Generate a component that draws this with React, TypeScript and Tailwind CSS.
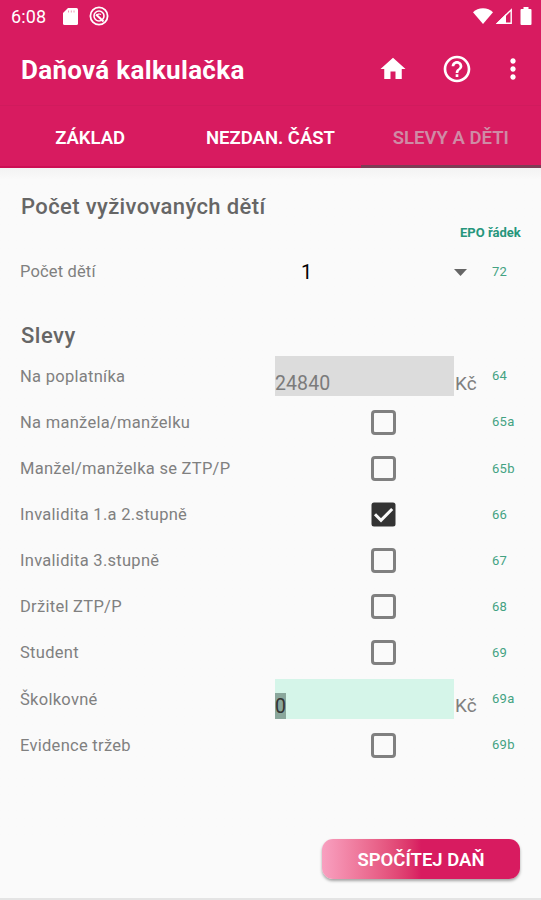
import { MdHome, MdHelpOutline, MdMoreVert } from "react-icons/md";

interface Row {
  label: string;
  code: string;
  checked?: boolean;
  value?: string;
  active?: boolean;
}

const ROWS: Row[] = [
  { label: "Na poplatníka", code: "64", value: "24840" },
  { label: "Na manžela/manželku", code: "65a" },
  { label: "Manžel/manželka se ZTP/P", code: "65b" },
  { label: "Invalidita 1.a 2.stupně", code: "66", checked: true },
  { label: "Invalidita 3.stupně", code: "67" },
  { label: "Držitel ZTP/P", code: "68" },
  { label: "Student", code: "69" },
  { label: "Školkovné", code: "69a", value: "0", active: true },
  { label: "Evidence tržeb", code: "69b" },
];

function StatusBar() {
  return (
    <div className="flex h-8 items-center pl-[11px] pr-[9px]">
      <span className="w-[52px] pt-px text-[18px] leading-8 tracking-[0.1px]">6:08</span>
      <svg width="15" height="17" viewBox="0 0 15 17" fill="currentColor">
        <path d="M5 0h8.500a1.500 1.500 0 0 1 1.500 1.500v14a1.500 1.500 0 0 1-1.500 1.500h-12a1.500 1.500 0 0 1-1.500-1.500V5z" />
        <path d="M5.500 2.500v2M8.300 2.500v2M11 2.500v2" stroke="#d81b60" strokeOpacity=".45" strokeWidth="1" />
      </svg>
      <svg className="ml-[11px]" width="20" height="20" viewBox="0 0 20 20" fill="none" stroke="currentColor">
        <circle cx="10" cy="10" r="8.600" strokeWidth="1.800" />
        <circle cx="10" cy="10" r="5" strokeWidth="1.600" />
        <path d="M7 8.500 14.500 15.500" strokeWidth="2" />
        <path d="M7.500 10a3 3 0 0 1 4.500-1.500" strokeWidth="1.200" />
      </svg>
      <div className="flex-1" />
      <svg width="20" height="16" viewBox="0 0 20 16" fill="currentColor">
        <path d="M0 4.200C2.700 1.700 6 .3 10 .3s7.300 1.400 10 3.900L10 16z" />
      </svg>
      <svg className="ml-0.5" width="17" height="16" viewBox="0 0 17 16">
        <path d="M2.500 15.200 16.200 1.800v13.400z" fill="none" stroke="currentColor" strokeWidth="1.400" />
        <path d="M1 15.700 11 6v9.700z" fill="currentColor" />
      </svg>
      <svg className="ml-2" width="12" height="18" viewBox="0 0 12 18" fill="currentColor">
        <path d="M3.500 0h5v2H10.500a1 1 0 0 1 1 1v14a1 1 0 0 1-1 1h-9a1 1 0 0 1-1-1V3a1 1 0 0 1 1-1h2z" />
      </svg>
    </div>
  );
}

function Checkbox({ checked }: { checked?: boolean }) {
  if (checked) {
    return (
      <svg width="25" height="25" viewBox="0 0 25 25">
        <rect x=".5" y=".5" width="24" height="24" rx="2.500" fill="#333" />
        <path d="m4 12.300 6 6L21.200 7" fill="none" stroke="#fafafa" strokeWidth="3" />
      </svg>
    );
  }
  return <div className="size-[25px] rounded-[4px] border-3 border-[#808080]" />;
}

function DiscountRow({ row }: { row: Row }) {
  return (
    <div className="flex h-[46.125px] items-center">
      <span className="w-[255px] whitespace-nowrap pt-[2px] text-[16.5px] tracking-[0.28px] text-[#808080]">
        {row.label}
      </span>
      {row.value !== undefined ? (
        <>
          <div
            className={`flex h-10 w-[179px] items-end text-[19.5px] leading-[26px] tracking-[0.1px] ${
              row.active ? "bg-[#d5f5e9] text-[#333]" : "bg-[#dcdcdc] text-[#7b7b7b]"
            }`}
          >
            <span className={row.active ? "h-[26px] bg-[#8aa79c] leading-[28px]" : "h-[26px] leading-[28px]"}>
              {row.value}
            </span>
          </div>
          <span className="mt-[15px] w-[38px] pl-px text-[19px] leading-[26px] text-[#808080]">Kč</span>
        </>
      ) : (
        <div className="flex w-[217px] pl-24">
          <Checkbox checked={row.checked} />
        </div>
      )}
      <span className="text-[13px] tracking-[0.3px] text-[#43a282]">{row.code}</span>
    </div>
  );
}

export default function App() {
  return (
    <div className="flex h-[900px] w-[541px] flex-col overflow-hidden bg-[#fafafa] font-[Roboto,sans-serif]">
      <header className="h-[168px] bg-[#d81b60] text-white">
        <StatusBar />
        <div className="flex h-[73px] items-center pl-[21px] pr-3">
          <h1 className="flex-1 pt-[3px] text-[26px] font-bold tracking-[0.3px]">Daňová kalkulačka</h1>
          <MdHome size={30} />
          <MdHelpOutline className="ml-[33px]" size={32} />
          <MdMoreVert className="ml-6" size={32} />
        </div>
        <nav className="grid h-[63px] grid-cols-3 border-t border-[#d01b5d] text-center text-[18.5px] font-semibold leading-[64px]">
          <span className="h-[62px] border-b-2 border-[#cc0f54]">ZÁKLAD</span>
          <span className="h-[62px] border-b-2 border-[#cc0f54]">NEZDAN. ČÁST</span>
          <span className="h-[62px] border-b-3 border-[#7d3c55] text-[#cf8ba5]">SLEVY A DĚTI</span>
        </nav>
      </header>

      <main className="flex-1 bg-linear-to-b from-[#f3f3f3] to-[#fafafa] to-[12px] pl-5 text-[#666]">
        <h2 className="pl-px pt-[23px] text-[22px] font-medium leading-8 tracking-[0.38px]">Počet vyživovaných dětí</h2>
        <div className="pl-[440px] text-[13px] font-bold leading-[20px] text-[#26967c]">EPO řádek</div>
        <div className="mt-px flex h-14 items-center">
          <span className="w-[281px] pt-px text-[16.5px] tracking-[0.15px] text-[#808080]">Počet dětí</span>
          <span className="w-[153px] text-[20px] text-black">1</span>
          <svg className="mr-[25px]" width="13" height="7" viewBox="0 0 13 7">
            <path d="M0 0h13L6.500 7z" fill="#666" />
          </svg>
          <span className="text-[13px] tracking-[0.3px] text-[#43a282]">72</span>
        </div>
        <h2 className="pl-px pt-5 text-[22px] font-medium leading-8 tracking-[0.5px]">Slevy</h2>
        <div className="pt-px">
          {ROWS.map((row) => (
            <DiscountRow key={row.code} row={row} />
          ))}
        </div>
      </main>

      <footer className="flex h-[61px] justify-end border-b-2 border-[#e4e4e4] pr-[21px]">
        <button className="h-10 w-[198px] rounded-[11px] bg-linear-to-r from-[#f8a0c0] via-[#d81b60] via-50% to-[#d81b60] pt-[4px] text-[18.5px] font-semibold text-white shadow-[0_2px_3px_rgba(0,0,0,0.35)]">
          SPOČÍTEJ DAŇ
        </button>
      </footer>
    </div>
  );
}
